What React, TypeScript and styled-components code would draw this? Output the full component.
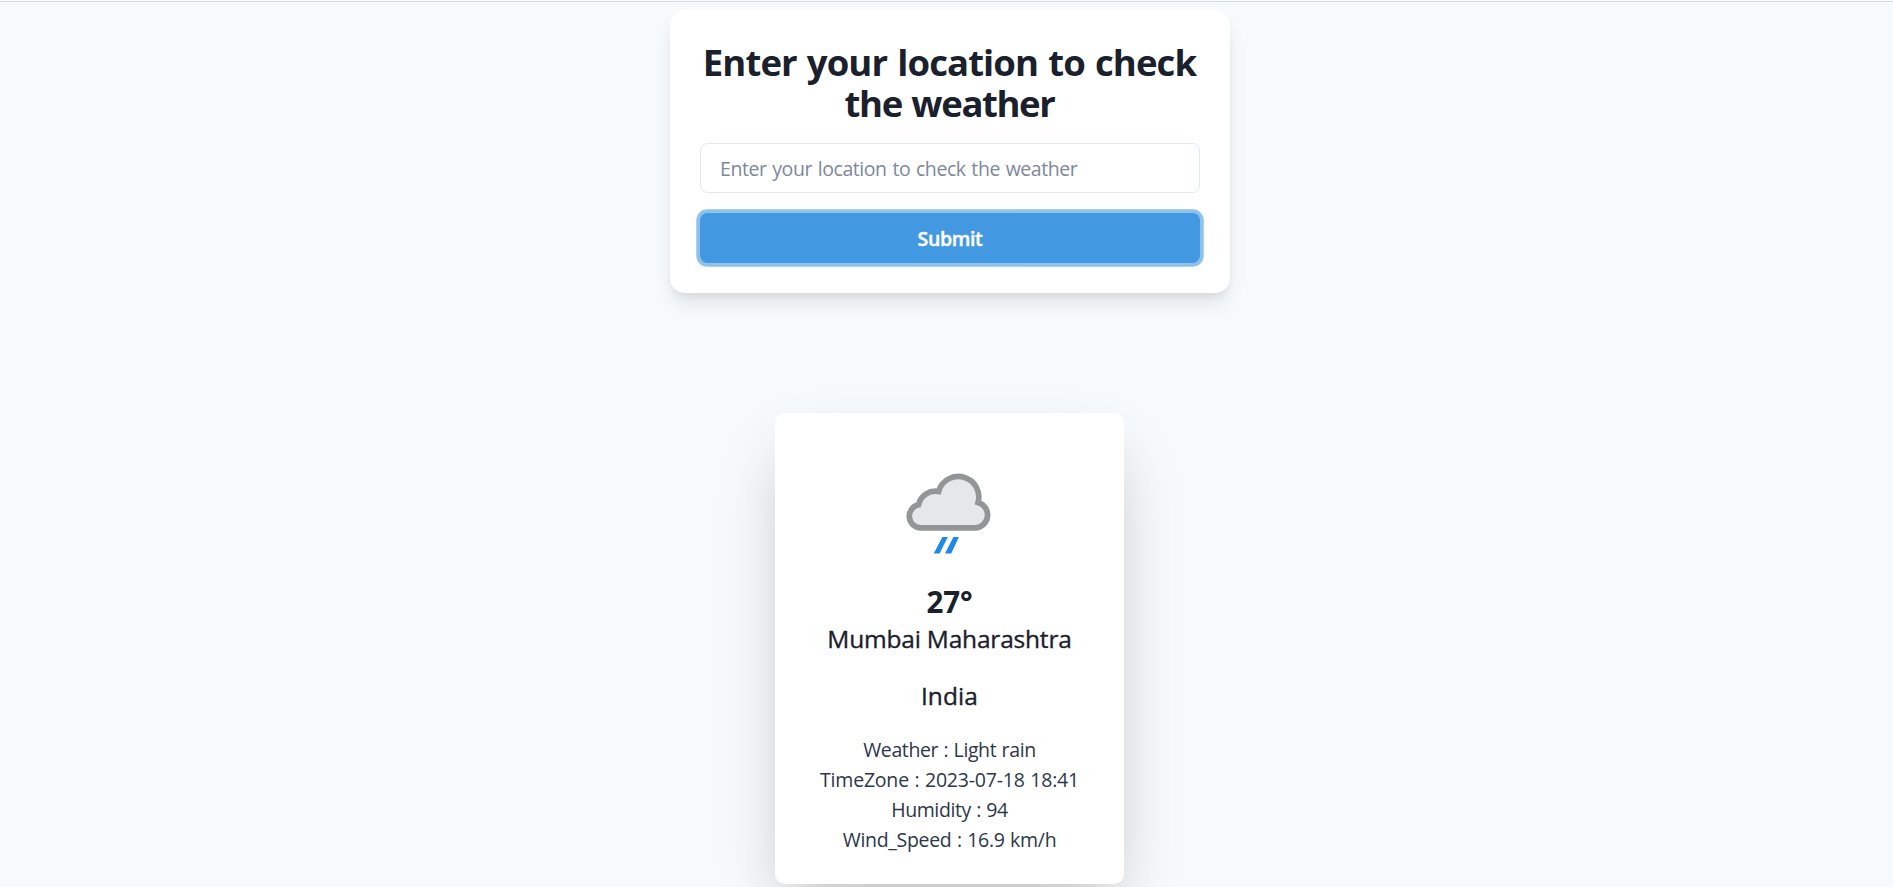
import React from "react";
import styled, { createGlobalStyle } from "styled-components";

const GlobalStyle = createGlobalStyle`
  *, *::before, *::after { box-sizing: border-box; }
  html { overflow: hidden; }
  body {
    margin: 0;
    height: 100vh;
    overflow: hidden;
    background: #f7fafc;
    color: #1a202c;
    font-family: "Segoe UI", "Open Sans", "Noto Sans", sans-serif;
    font-size: 20px;
    line-height: 1.5;
  }
`;

const TopRule = styled.div`
  height: 2px;
  border-bottom: 1px solid #dadde0;
`;

const Page = styled.main`
  width: 1900px;
  min-height: 886px;
  padding-top: 8px;
  display: flex;
  flex-direction: column;
  align-items: center;
  gap: 120px;
  background: #f6fafd;
`;

const SearchCard = styled.form`
  width: 560px;
  height: 283px;
  padding: 30px;
  display: flex;
  flex-direction: column;
  gap: 20px;
  background: #fff;
  border-radius: 15px;
  box-shadow: 0 12.5px 18.75px -3.75px rgba(0, 0, 0, 0.1),
    0 5px 7.5px -2.5px rgba(0, 0, 0, 0.05);
`;

const Title = styled.h1`
  margin: 0;
  padding-top: 2px;
  height: 83px;
  font-size: 36.5px;
  font-weight: 700;
  line-height: 41.25px;
  text-align: center;
  white-space: nowrap;
`;

const TitleLine = styled.span<{ $tracking: number }>`
  display: block;
  margin-right: 1px;
  letter-spacing: ${(p) => p.$tracking}px;
  word-spacing: 1.5px;
`;

const LocationInput = styled.input`
  width: 100%;
  height: 50px;
  padding: 0 20px 0 19px;
  font: inherit;
  font-size: 19.5px;
  letter-spacing: -0.43px;
  word-spacing: 1.1px;
  color: inherit;
  background: #fff;
  border: 1px solid #e2e8f0;
  border-radius: 7.5px;
  outline: none;
  &::placeholder { color: #7c889c; opacity: 1; }
`;

const SubmitButton = styled.button`
  width: 100%;
  height: 50px;
  padding: 2px 0 0;
  border: 0;
  border-radius: 7.5px;
  background: #4299e1;
  color: #fff;
  font: inherit;
  font-size: 19.5px;
  font-weight: 600;
  letter-spacing: -0.35px;
  -webkit-text-stroke: 0.4px #fff;
  box-shadow: 0 0 0 3.75px rgba(66, 153, 225, 0.6);
`;

const WeatherCard = styled.section`
  width: 349px;
  height: 471px;
  margin-right: 1px;
  padding: 30px 0 28px;
  display: flex;
  flex-direction: column;
  align-items: center;
  text-align: center;
  white-space: nowrap;
  background: #fff;
  border-radius: 10px;
  box-shadow: 0 31.25px 62.5px -15px rgba(0, 0, 0, 0.25);
`;

const IconSlot = styled.div`
  height: 141px;
  padding-top: 17px;
  svg { display: block; }
`;

const Temperature = styled.h2`
  margin: 0;
  font-size: 29.5px;
  font-weight: 700;
  line-height: 36px;
  letter-spacing: -0.1px;
`;

const Place = styled.p<{ $tracking: number }>`
  margin: 0 0 19px;
  font-size: 24.5px;
  font-weight: 500;
  line-height: 37.5px;
  letter-spacing: ${(p) => p.$tracking}px;
  -webkit-text-stroke: 0.35px currentColor;
`;

const Details = styled.div`
  padding-top: 2px;
`;

const Detail = styled.p<{ $tracking: number }>`
  margin: 0;
  font-size: 19.5px;
  line-height: 30px;
  color: #2d3748;
  letter-spacing: ${(p) => p.$tracking}px;
  word-spacing: 0.7px;
`;

const details = [
  { text: "Weather : Light rain", tracking: -0.39 },
  { text: "TimeZone : 2023-07-18 18:41", tracking: -0.2 },
  { text: "Humidity : 94", tracking: -0.4 },
  { text: "Wind_Speed : 16.9 km/h", tracking: -0.3 },
];

function LightRainIcon() {
  return (
    <svg width="120" height="110" viewBox="0 0 120 110" aria-label="Light rain">
      <path
        d="M31.8 67.9 A11.7 11.7 0 0 1 28.5 44.8 A17.3 17.3 0 0 1 48.6 31.5 A20.4 20.4 0 0 1 88.1 42.4 A13 13 0 0 1 85.3 67.9 Z"
        fill="#e6e7e8"
        stroke="#939696"
        strokeWidth="5.7"
      />
      <path
        d="M52.4 77 H57.8 L49.6 93.6 H43.7 Z M63.4 77 H68.9 L61.2 93.6 H55 Z"
        fill="#2088e8"
      />
    </svg>
  );
}

export default function App() {
  return (
    <>
      <GlobalStyle />
      <TopRule />
      <Page>
        <SearchCard onSubmit={(e) => e.preventDefault()}>
          <Title>
            <TitleLine $tracking={-0.9}>Enter your location to check</TitleLine>
            <TitleLine $tracking={-1.4}>the weather</TitleLine>
          </Title>
          <LocationInput placeholder="Enter your location to check the weather" />
          <SubmitButton type="submit">Submit</SubmitButton>
        </SearchCard>
        <WeatherCard>
          <IconSlot>
            <LightRainIcon />
          </IconSlot>
          <Temperature>27°</Temperature>
          <Place $tracking={-0.2}>Mumbai Maharashtra</Place>
          <Place $tracking={0.1}>India</Place>
          <Details>
            {details.map((d) => (
              <Detail key={d.text} $tracking={d.tracking}>
                {d.text}
              </Detail>
            ))}
          </Details>
        </WeatherCard>
      </Page>
    </>
  );
}
